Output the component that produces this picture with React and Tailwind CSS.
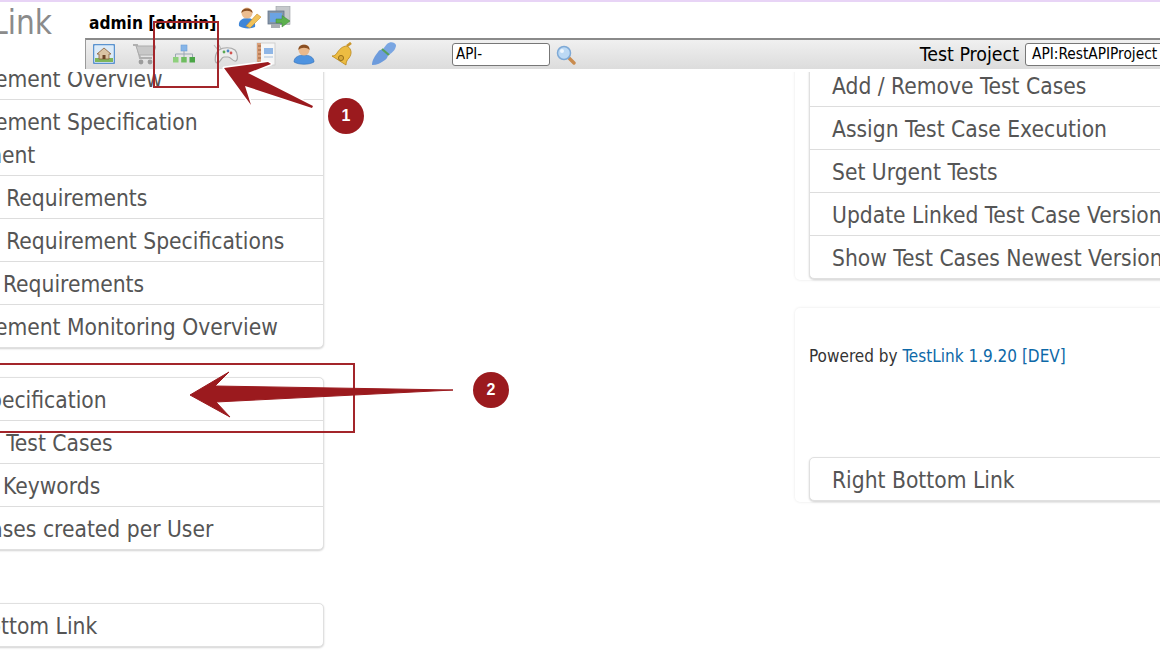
import React from 'react';

const fontBody = "font-['DejaVu_Sans_Condensed','DejaVu_Sans',sans-serif]";

const HomeIcon = () => (
  <svg width="22" height="20" viewBox="0 0 22 20" className="shrink-0">
    <rect x="0.5" y="0.5" width="21" height="19" rx="1.5" fill="#dcebf8" stroke="#5b93cf" strokeWidth="1.5" />
    <rect x="2" y="14" width="18" height="4" fill="#7fb55a" />
    <path d="M4 10 L11 4 L18 10 L16 10 L16 15 L6 15 L6 10 Z" fill="#d9c3a3" stroke="#8a5f3a" strokeWidth="0.8" />
    <rect x="9.5" y="11" width="3" height="4" fill="#6b4426" />
  </svg>
);

const CartIcon = () => (
  <svg width="24" height="22" viewBox="0 0 24 22" className="shrink-0">
    <path d="M1 2 L5 2 L8 15 L20 15" fill="none" stroke="#b0b0b0" strokeWidth="2" />
    <path d="M4 3 L24 3 L21 12 L7 12 Z" fill="#c8c8c8" stroke="#acacac" strokeWidth="1" />
    <circle cx="9" cy="19" r="2.4" fill="#9c9c9c" />
    <circle cx="18" cy="19" r="2.4" fill="#9c9c9c" />
  </svg>
);

const TreeIcon = () => (
  <svg width="24" height="20" viewBox="0 0 24 20" className="shrink-0">
    <rect x="9" y="1" width="6" height="6" fill="#86b5e8" stroke="#6c9fd6" strokeWidth="0.6" />
    <path d="M12 7 L12 10 M3.5 13 L3.5 10 L20.5 10 L20.5 13 M12 10 L12 13" fill="none" stroke="#9aa6b2" strokeWidth="1" />
    <rect x="1" y="13" width="5.5" height="5.5" fill="#8fd07d" />
    <rect x="9.2" y="13" width="5.5" height="5.5" fill="#70bd61" />
    <rect x="17.5" y="13" width="5.5" height="5.5" fill="#4aa546" />
  </svg>
);

const GamepadIcon = () => (
  <svg width="26" height="22" viewBox="0 0 26 22" className="shrink-0">
    <path d="M1 2 L5 7 M6 2 L8 6" stroke="#bdbdbd" strokeWidth="1.2" />
    <path d="M6 7 C10 4 18 4 22 7 C25 10 25 17 23 18 C20 19 18 14 15 14 L11 14 C8 14 7 21 4 20 C1 19 2 10 6 7 Z" fill="#ececec" stroke="#a9a9a9" strokeWidth="1.2" />
    <circle cx="11" cy="9" r="1.4" fill="#5aa852" />
    <circle cx="15" cy="8" r="1.4" fill="#4c86c4" />
    <circle cx="18" cy="10" r="1.4" fill="#d2524e" />
  </svg>
);

const BookIcon = () => (
  <svg width="20" height="24" viewBox="0 0 20 24" className="shrink-0">
    <rect x="1" y="1" width="18" height="22" fill="#f6f6f6" stroke="#c9c9c9" strokeWidth="0.8" />
    <rect x="1" y="1" width="4" height="22" fill="#d9a07a" />
    <path d="M2 4 H5 M2 8 H5 M2 12 H5 M2 16 H5 M2 20 H5" stroke="#8a4f2a" strokeWidth="0.8" />
    <rect x="8" y="6" width="9" height="6" fill="#8fb6e6" />
    <path d="M8 15 H17" stroke="#b9cbe0" strokeWidth="1.2" />
  </svg>
);

const UserIcon = () => (
  <svg width="22" height="22" viewBox="0 0 22 22" className="shrink-0">
    <path d="M1 19 C1 14 6 12 11 12 C16 12 21 14 21 19 C16 22 6 22 1 19 Z" fill="#4e93e0" stroke="#2f6db5" strokeWidth="0.6" />
    <circle cx="11" cy="7" r="5.5" fill="#eab98c" />
    <path d="M5.5 7 C4.5 0 17.5 0 16.5 7 C14 4 8 4 5.5 7 Z" fill="#8a4f22" />
  </svg>
);

const BellIcon = () => (
  <svg width="24" height="24" viewBox="0 0 24 24" className="shrink-0">
    <path d="M16 4 C11 4 8 8 6 11 C5 13 3 14 1 14 L15 23 C15 20 16 18 18 16 C21 12 21 7 16 4 Z" fill="#ecbc42" stroke="#b98518" strokeWidth="0.8" />
    <path d="M16 4 L20 1" stroke="#c9952a" strokeWidth="2.8" />
    <circle cx="10" cy="16" r="2.6" fill="#d8a838" stroke="#8a6212" strokeWidth="0.8" />
  </svg>
);

const PlugIcon = () => (
  <svg width="24" height="24" viewBox="0 0 24 24" className="shrink-0">
    <path d="M0 23 C0 18 3 14 6 10 C8 7 12 7 14 9 L15 10 C17 12 16 16 13 18 C9 21 5 23 0 23 Z" fill="#6d9bdc" />
    <path d="M11 7 L15 2 C18 -1 23 0 24 3 C24 7 21 10 17 13 Z" fill="#7aa6e2" />
    <path d="M10 7 L17 13" stroke="#57a05a" strokeWidth="2.2" />
  </svg>
);

const SearchIcon = () => (
  <svg width="20" height="20" viewBox="0 0 20 20" className="shrink-0">
    <path d="M12 12 L18 18" stroke="#c98b4e" strokeWidth="3.4" strokeLinecap="round" />
    <circle cx="8" cy="8" r="6.5" fill="#bcd9f4" stroke="#7ea9d6" strokeWidth="1.5" />
    <circle cx="6" cy="6" r="2" fill="#eef6fd" />
  </svg>
);

const PencilUserIcon = () => (
  <svg width="24" height="22" viewBox="0 0 24 22" className="shrink-0">
    <path d="M1 19 C0 14 4 11 9 11 C14 11 18 14 17 20 C13 22 5 22 1 19 Z" fill="#3f86d8" />
    <circle cx="9" cy="6" r="5.5" fill="#ecbd90" />
    <path d="M3.5 6 C3 0 15 0 14.5 6 C12 3 6 3 3.5 6 Z" fill="#8a4f22" />
    <path d="M8 19 L19 7 L23 10 L12 21 Z" fill="#f0c25a" stroke="#c98f2c" strokeWidth="0.6" />
  </svg>
);

const ComputerIcon = () => (
  <svg width="24" height="24" viewBox="0 0 24 24" className="shrink-0">
    <rect x="9" y="0.5" width="14" height="18" fill="#c6c9cc" stroke="#9a9ea3" strokeWidth="0.6" />
    <rect x="1" y="5" width="16" height="13" fill="#8596aa" stroke="#65758a" strokeWidth="0.8" />
    <rect x="3" y="7" width="12" height="9" fill="#6ba3e3" />
    <rect x="4" y="18" width="9" height="4" fill="#a9adb2" />
    <path d="M9 13 L15 13 L15 9.5 L23 15 L15 21 L15 17 L9 17 Z" fill="#5cb04e" stroke="#3d8a36" strokeWidth="0.5" />
  </svg>
);

const Row = ({ children, last }) => (
  <div className={`px-[22px] pt-[6px] pb-[3px] leading-[33px] whitespace-nowrap ${last ? '' : 'border-b border-[#dddddd]'}`}>
    {children}
  </div>
);

const Card = ({ className = '', children }) => (
  <div className={`rounded-[5px] border border-[#e0e0e0] bg-white shadow-[0_1px_2px_rgba(0,0,0,0.18)] ${className}`}>
    {children}
  </div>
);

export default function App() {
  return (
    <div className={`relative h-[665px] w-[1160px] overflow-hidden bg-white ${fontBody}`}>
      <div className="h-[2px] bg-[#e8d4f6]" />

      {/* top bar */}
      <div className="flex h-[36px] items-start">
        <div className="-ml-[86px] w-[175px] pt-[1px] text-right text-[33px] leading-[40px] pr-[37px] whitespace-nowrap text-[#8b8b8b]">TestLink</div>
        <div className="pt-[9px] text-[17.2px] font-bold leading-[24px] text-black whitespace-nowrap">admin [admin]</div>
        <div className="ml-[22px] mt-[4px] flex items-center gap-[5px]">
          <PencilUserIcon />
          <ComputerIcon />
        </div>
      </div>

      {/* toolbar */}
      <div className="relative z-10 bg-white pb-[3px] pl-[85px]">
        <div className="flex h-[31px] items-center border-l border-t-2 border-[#8a8a8a] border-l-[#9a9a9a] bg-gradient-to-b from-[#f0f0f0] to-[#dcdcdc] pl-[7px]">
          <div className="flex w-[303px] -translate-y-[1px] items-center justify-between">
            <HomeIcon />
            <CartIcon />
            <TreeIcon />
            <GamepadIcon />
            <BookIcon />
            <UserIcon />
            <BellIcon />
            <PlugIcon />
          </div>
          <div className="ml-[56px] h-[23px] w-[98px] rounded-[3px] border border-[#777777] bg-white pl-[3px] text-[15px] leading-[21px] text-black">API-</div>
          <div className="ml-[6px]"><SearchIcon /></div>
          <div className="ml-auto -mr-[10px] flex items-center gap-[6px]">
            <span className="text-[19.4px] text-black whitespace-nowrap">Test Project</span>
            <div className="h-[23px] w-[145px] rounded-[3px] border border-[#777777] bg-white pl-[6px] text-[15.3px] leading-[21px] text-black whitespace-nowrap">API:RestAPIProject</div>
          </div>
        </div>
      </div>

      {/* content */}
      <div className="flex items-start text-[22.6px] text-[#555555]">
        <div className="-ml-[93px] -mt-[16px] w-[417px] shrink-0">
          <Card>
            <Row>Requirement Overview</Row>
            <div className="border-b border-[#dddddd] px-[22px] pt-[6px] pb-[3px] leading-[33px]">Requirement Specification<br />Document</div>
            <Row>Search Requirements</Row>
            <Row>Search Requirement Specifications</Row>
            <Row>Assign Requirements</Row>
            <Row last>Requirement Monitoring Overview</Row>
          </Card>
          <Card className="mt-[29px]">
            <Row>Test Specification</Row>
            <Row>Search Test Cases</Row>
            <Row>Assign Keywords</Row>
            <Row last>Test Cases created per User</Row>
          </Card>
          <Card className="mt-[53px]">
            <Row last>Left Bottom Link</Row>
          </Card>
        </div>

        <div className="ml-[471px] -mt-[9px] w-[400px] shrink-0">
          <div className="rounded-[5px] pl-[14px] pb-[1px] shadow-[0_0_3px_rgba(0,0,0,0.1)]">
            <Card>
              <Row>Add / Remove Test Cases</Row>
              <Row>Assign Test Case Execution</Row>
              <Row>Set Urgent Tests</Row>
              <Row>Update Linked Test Case Versions</Row>
              <Row last>Show Test Cases Newest Versions</Row>
            </Card>
          </div>
          <div className="mt-[28px] rounded-[5px] pl-[14px] pb-[1px] shadow-[0_0_3px_rgba(0,0,0,0.1)]">
            <div className="pt-[36px] text-[17px] leading-[24px] text-[#333333] whitespace-nowrap">
              Powered by <a className="text-[#0e69a8]">TestLink 1.9.20 [DEV]</a>
            </div>
            <Card className="mt-[89px]">
              <Row last>Right Bottom Link</Row>
            </Card>
          </div>
        </div>
      </div>

      {/* annotations */}
      <div className="absolute left-[153px] top-[21px] z-20 h-[67px] w-[66px] border-2 border-[#a3252a]" />
      <div className="absolute left-[-10px] top-[363px] z-20 h-[70px] w-[365px] border-2 border-[#a3252a]" />
      <svg width="1160" height="665" viewBox="0 0 1160 665" className="absolute left-0 top-0 z-20">
        <path d="M224 68 L268 62 L271 64 L248 73 L313 106 L312 108 L245 86 L251 105 Z" fill="#9b1a1e" stroke="#ffffff" strokeWidth="3" strokeLinejoin="round" className="[paint-order:stroke]" />
        <path d="M190 395 L229 372 L215 386 L453 390 L216 402 L230 417 Z" fill="#9b1a1e" stroke="#9b1a1e" strokeWidth="1" strokeLinejoin="round" />
      </svg>
      <div className="absolute left-[328px] top-[98px] z-20 flex h-[36px] w-[36px] items-center justify-center rounded-full bg-[#9b1a1e] font-['Liberation_Sans',sans-serif] text-[16px] font-bold text-white">1</div>
      <div className="absolute left-[473px] top-[372px] z-20 flex h-[36px] w-[36px] items-center justify-center rounded-full bg-[#9b1a1e] font-['Liberation_Sans',sans-serif] text-[16px] font-bold text-white">2</div>
    </div>
  );
}
